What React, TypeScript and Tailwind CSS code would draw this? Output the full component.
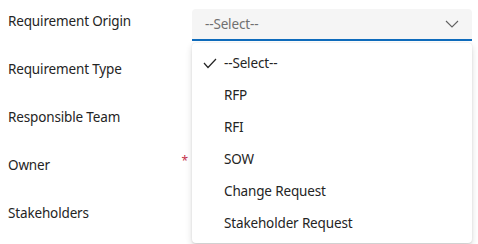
import React from "react";

const labels = ["Requirement Origin", "Requirement Type", "Responsible Team", "Owner", "Stakeholders"];
const options = ["--Select--", "RFP", "RFI", "SOW", "Change Request", "Stakeholder Request"];

export default function App() {
  return (
    <div
      className="relative w-[478px] h-[244px] overflow-hidden bg-white text-[13.5px] tracking-[-0.15px] text-[#242424]"
      style={{ fontFamily: '"Noto Sans", "Open Sans", sans-serif' }}
    >
      <div className="flex flex-col pt-[9px] pl-2">
        {labels.map((l, i) => (
          <div key={l} className="flex h-[48px]">
            <div className="w-[184px] flex justify-between pt-[2px] pr-[4px]">
              <span className="leading-[20px]">{l}</span>
              {l === "Owner" && <span className="leading-[20px] text-[#c4314b] text-[12px] mt-[-4px]">*</span>}
            </div>
            {i === 0 && (
              <div className="w-[280px] h-[32px] bg-[#f5f5f5] rounded-t-[4px] border-b-2 border-[#0f6cbd] flex items-center justify-between pl-[13px] pr-[13px]">
                <span className="text-[#707070] leading-[20px]">--Select--</span>
                <svg width="14" height="8" viewBox="0 0 14 8" fill="none">
                  <polyline points="1,1 7,7 13,1" stroke="#616161" strokeWidth="1.1" />
                </svg>
              </div>
            )}
          </div>
        ))}
      </div>
      <div className="absolute left-[192px] top-[43px] w-[280px] bg-white rounded-[4px] py-[4px] shadow-[0_3px_7px_rgba(0,0,0,0.14),0_0.6px_1.8px_rgba(0,0,0,0.11)]">
        {options.map((o, i) => (
          <div key={o} className="h-[32px] flex items-center">
            <div className="w-[32px] flex justify-end pr-[7px]">
              {i === 0 && (
                <svg width="14" height="11" viewBox="0 0 14 11" fill="none">
                  <polyline points="1,5 5,9.5 13,1" stroke="#242424" strokeWidth="1.2" />
                </svg>
              )}
            </div>
            <span className="leading-[20px]">{o}</span>
          </div>
        ))}
      </div>
    </div>
  );
}
